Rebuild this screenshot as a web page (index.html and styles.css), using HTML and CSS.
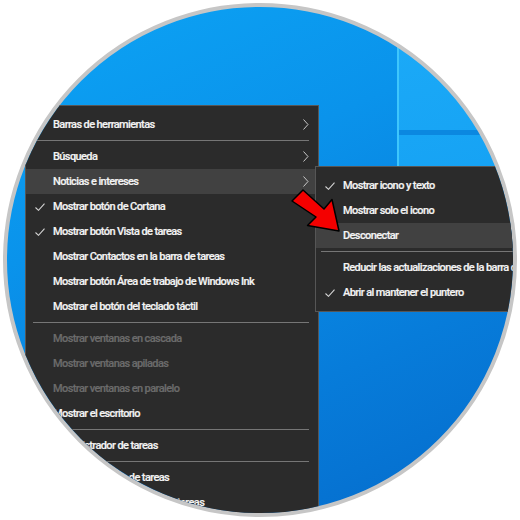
FILE: index.html
```html
<!DOCTYPE html>
<html>
<head>
    <link rel="stylesheet" href="styles.css">
</head>
<body>
    <div class="lens">
        <!-- taskbar context menu -->
        <div class="menu main">
            <div class="item"><span class="mark"></span>Barras de herramientas<svg class="chev" viewBox="0 0 6 11"><polyline points="0.5,0.5 5,5.5 0.5,10.5"/></svg></div>
            <div class="sep"></div>
            <div class="item"><span class="mark"></span>Búsqueda<svg class="chev" viewBox="0 0 6 11"><polyline points="0.5,0.5 5,5.5 0.5,10.5"/></svg></div>
            <div class="item hover"><span class="mark"></span>Noticias e intereses<svg class="chev" viewBox="0 0 6 11"><polyline points="0.5,0.5 5,5.5 0.5,10.5"/></svg></div>
            <div class="item"><span class="mark"><svg class="tick" viewBox="0 0 10 8"><polyline points="0.5,4.5 3.5,7.3 9.5,0.7"/></svg></span>Mostrar botón de Cortana</div>
            <div class="item"><span class="mark"><svg class="tick" viewBox="0 0 10 8"><polyline points="0.5,4.5 3.5,7.3 9.5,0.7"/></svg></span>Mostrar botón Vista de tareas</div>
            <div class="item"><span class="mark"></span>Mostrar Contactos en la barra de tareas</div>
            <div class="item"><span class="mark"></span>Mostrar botón Área de trabajo de Windows Ink</div>
            <div class="item"><span class="mark"></span>Mostrar el botón del teclado táctil</div>
            <div class="sep"></div>
            <div class="item off"><span class="mark"></span>Mostrar ventanas en cascada</div>
            <div class="item off"><span class="mark"></span>Mostrar ventanas apiladas</div>
            <div class="item off"><span class="mark"></span>Mostrar ventanas en paralelo</div>
            <div class="item"><span class="mark"></span>Mostrar el escritorio</div>
            <div class="sep"></div>
            <div class="item"><span class="mark"></span>Administrador de tareas</div>
            <div class="sep"></div>
            <div class="item"><span class="mark"><svg class="tick" viewBox="0 0 10 8"><polyline points="0.5,4.5 3.5,7.3 9.5,0.7"/></svg></span>Bloquear la barra de tareas</div>
            <div class="item"><span class="mark"></span>Configuración de la barra de tareas</div>
        </div>

        <!-- Noticias e intereses flyout -->
        <div class="menu flyout">
            <div class="item"><span class="mark"><svg class="tick" viewBox="0 0 10 8"><polyline points="0.5,4.5 3.5,7.3 9.5,0.7"/></svg></span>Mostrar icono y texto</div>
            <div class="item"><span class="mark"></span>Mostrar solo el icono</div>
            <div class="item hover"><span class="mark"></span>Desconectar</div>
            <div class="sep"></div>
            <div class="item"><span class="mark"></span>Reducir las actualizaciones de la barra de tareas</div>
            <div class="item"><span class="mark"><svg class="tick" viewBox="0 0 10 8"><polyline points="0.5,4.5 3.5,7.3 9.5,0.7"/></svg></span>Abrir al mantener el puntero</div>
        </div>

        <svg class="arrow" viewBox="7 7 506 506">
            <polygon points="292,201 303,190 324,209 332,199.5 339,231 307.5,225.5 316,217"/>
        </svg>
    </div>
</body>
</html>
```

FILE: styles.css
```css
body {
    margin: 0;
    background: white;
    font-family: Roboto, "Liberation Sans", Arial, sans-serif;
}

/* round magnifier crop of the desktop */
.lens {
    position: relative;
    width: 514px;
    height: 514px;
    margin: 3px;
    box-sizing: border-box;
    border: 4px solid #c6c6c6;
    border-radius: 50%;
    overflow: hidden;
    background-color: #0a8ee8;
    background-image:
        linear-gradient(#3ec6fc, #3ec6fc),
        linear-gradient(#0b88e0, #0b88e0),
        linear-gradient(165deg, #1cabf8, #15a1f3),
        linear-gradient(155deg, #0ca4f5 0%, #0a93eb 35%, #077cda 70%, #056bcb 100%);
    background-position: 390px 0, 392px 123px, 392px 0, 0 0;
    background-size: 2px 170px, 200px 5px, 200px 170px, 100% 100%;
    background-repeat: no-repeat;
}

.menu {
    position: absolute;
    box-sizing: border-box;
    background: #2b2b2b;
    border: 1px solid #565656;
    padding: 6px 0;
    color: #f4f4f4;
    font-size: 11px;
    font-weight: 500;
    letter-spacing: -0.6px;
    -webkit-text-stroke: 0.2px currentColor;
}
.main {
    left: 18px;
    top: 98px;
    width: 294px;
}
.flyout {
    left: 308px;
    top: 159px;
    width: 320px;
}

.item {
    display: flex;
    align-items: center;
    height: 25px;
    white-space: nowrap;
}
.item.hover {
    background: #414141;
}
.item.off {
    color: #6b6b6b;
}
.mark {
    flex: none;
    width: 27px;
    display: flex;
    justify-content: center;
}
.tick {
    width: 10px;
    height: 8px;
    fill: none;
    stroke: #d2d2d2;
    stroke-width: 1.1;
}
.chev {
    width: 6px;
    height: 11px;
    margin-left: auto;
    margin-right: 9px;
    fill: none;
    stroke: #c8c8c8;
    stroke-width: 1;
}
.sep {
    height: 1px;
    margin: 3px 9px 3px 7px;
    background: #767676;
}
.flyout .sep {
    margin-left: 5px;
    margin-right: 0;
}

.arrow {
    position: absolute;
    left: 0;
    top: 0;
    width: 506px;
    height: 506px;
}
.arrow polygon {
    fill: #f40000;
    stroke: #000;
    stroke-width: 1.5;
    stroke-linejoin: round;
}
```
